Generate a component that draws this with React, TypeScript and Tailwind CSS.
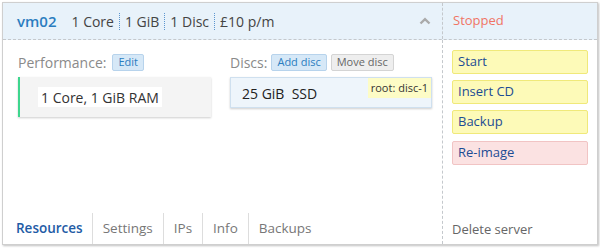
import React from "react";

const Sep = () => <span className="mx-[5px] h-[17px] border-l border-dotted border-[#5b95cf]" />;

export default function App() {
  const font = { fontFamily: '"Open Sans", "Noto Sans", sans-serif' };
  return (
    <div className="w-[600px] h-[248px] bg-white pt-[2px] pl-[2px]" style={font}>
      <div className="w-[596px] h-[243px] border border-[#cfcfcf] shadow-[1px_1px_2px_rgba(0,0,0,0.25)] flex flex-col bg-white">
        <div className="h-[37px] bg-[#e8f2fa] border-b border-dashed border-[#c4c8cc] flex">
          <div className="w-[440px] flex items-center pl-[14px] pr-[10px] border-r border-dashed border-[#c4c8cc]">
            <span className="text-[15px] font-semibold text-[#2b7dc0] mr-[15px]">vm02</span>
            <span className="text-[14px] text-[#444]">1 Core</span>
            <Sep />
            <span className="text-[14px] text-[#444]">1 GiB</span>
            <Sep />
            <span className="text-[14px] text-[#444]">1 Disc</span>
            <Sep />
            <span className="text-[14px] text-[#444]">£10 p/m</span>
            <svg className="ml-auto mr-[1px]" width="12" height="8" viewBox="0 0 12 8">
              <path d="M1.5 6.5 L6 2.2 L10.5 6.5" fill="none" stroke="#aaa" strokeWidth="2.4" />
            </svg>
          </div>
          <div className="flex-1 flex items-center pl-[10px] text-[13px] text-[#f07565]">Stopped</div>
        </div>
        <div className="flex flex-1">
          <div className="w-[440px] border-r border-dashed border-[#c4c8cc] flex flex-col">
            <div className="flex flex-1 pt-[13px] pl-[15px]">
              <div className="w-[193px]">
                <div className="flex items-center h-[18px]">
                  <span className="text-[14px] text-[#8a8a8a]">Performance:</span>
                  <span className="ml-[6px] h-[17px] px-[5px] flex items-center rounded-[2px] bg-[#d6e8f7] border border-[#b7d3ec] text-[11px] text-[#2b7dc0]">Edit</span>
                </div>
                <div className="mt-[6px] h-[40px] bg-[#f4f4f4] border-l-2 border-[#3ed68e] shadow-[0_1px_2px_rgba(0,0,0,0.2)] flex items-center pl-[18px]">
                  <span className="bg-white h-[20px] px-[3px] flex items-center text-[14px] text-[#333]">1 Core, 1 GiB RAM</span>
                </div>
              </div>
              <div className="ml-[19px] w-[202px]">
                <div className="flex items-center h-[18px]">
                  <span className="text-[14px] text-[#8a8a8a]">Discs:</span>
                  <span className="ml-[4px] h-[17px] px-[5px] flex items-center rounded-[2px] bg-[#d6e8f7] border border-[#b7d3ec] text-[11px] text-[#2b7dc0]">Add disc</span>
                  <span className="ml-[4px] h-[17px] px-[5px] flex items-center rounded-[2px] bg-[#eeeeee] border border-[#d4d4d4] text-[11px] text-[#666]">Move disc</span>
                </div>
                <div className="mt-[6px] h-[31px] bg-[#eef5fb] border border-[#cfe0ef] shadow-[0_1px_2px_rgba(0,0,0,0.2)] flex items-start justify-between">
                  <span className="pl-[11px] pt-[5px] text-[14px] text-[#222]">25 GiB&nbsp; SSD</span>
                  <span className="h-[20px] px-[3px] bg-[#fdfcc6] text-[11px] text-[#333] flex items-center">root: disc-1</span>
                </div>
              </div>
            </div>
            <div className="flex h-[31px] items-center text-[13.5px] text-[#777]">
              <span className="pl-[13px] pr-[9px] font-semibold text-[#1f5ca6] border-r border-[#ddd] h-full flex items-center">Resources</span>
              <span className="px-[10px] border-r border-[#ddd] h-full flex items-center">Settings</span>
              <span className="px-[10px] border-r border-[#ddd] h-full flex items-center">IPs</span>
              <span className="px-[10px] border-r border-[#ddd] h-full flex items-center">Info</span>
              <span className="px-[10px] h-full flex items-center">Backups</span>
            </div>
          </div>
          <div className="flex-1 flex flex-col pl-[9px] pr-[9px] pt-[10px]">
            <div className="h-[24px] mb-[6px] rounded-[2px] bg-[#fdfab8] border border-[#f0e97a] text-[13px] text-[#1c4c94] flex items-center pl-[5px]">Start</div>
            <div className="h-[24px] mb-[6px] rounded-[2px] bg-[#fdfab8] border border-[#f0e97a] text-[13px] text-[#1c4c94] flex items-center pl-[5px]">Insert CD</div>
            <div className="h-[24px] mb-[7px] rounded-[2px] bg-[#fdfab8] border border-[#f0e97a] text-[13px] text-[#1c4c94] flex items-center pl-[5px]">Backup</div>
            <div className="h-[24px] rounded-[2px] bg-[#fbe2e2] border border-[#f1c4c4] text-[13px] text-[#1c4c94] flex items-center pl-[5px]">Re-image</div>
            <div className="mt-auto mb-[5px] text-[13px] text-[#666]">Delete server</div>
          </div>
        </div>
      </div>
    </div>
  );
}
